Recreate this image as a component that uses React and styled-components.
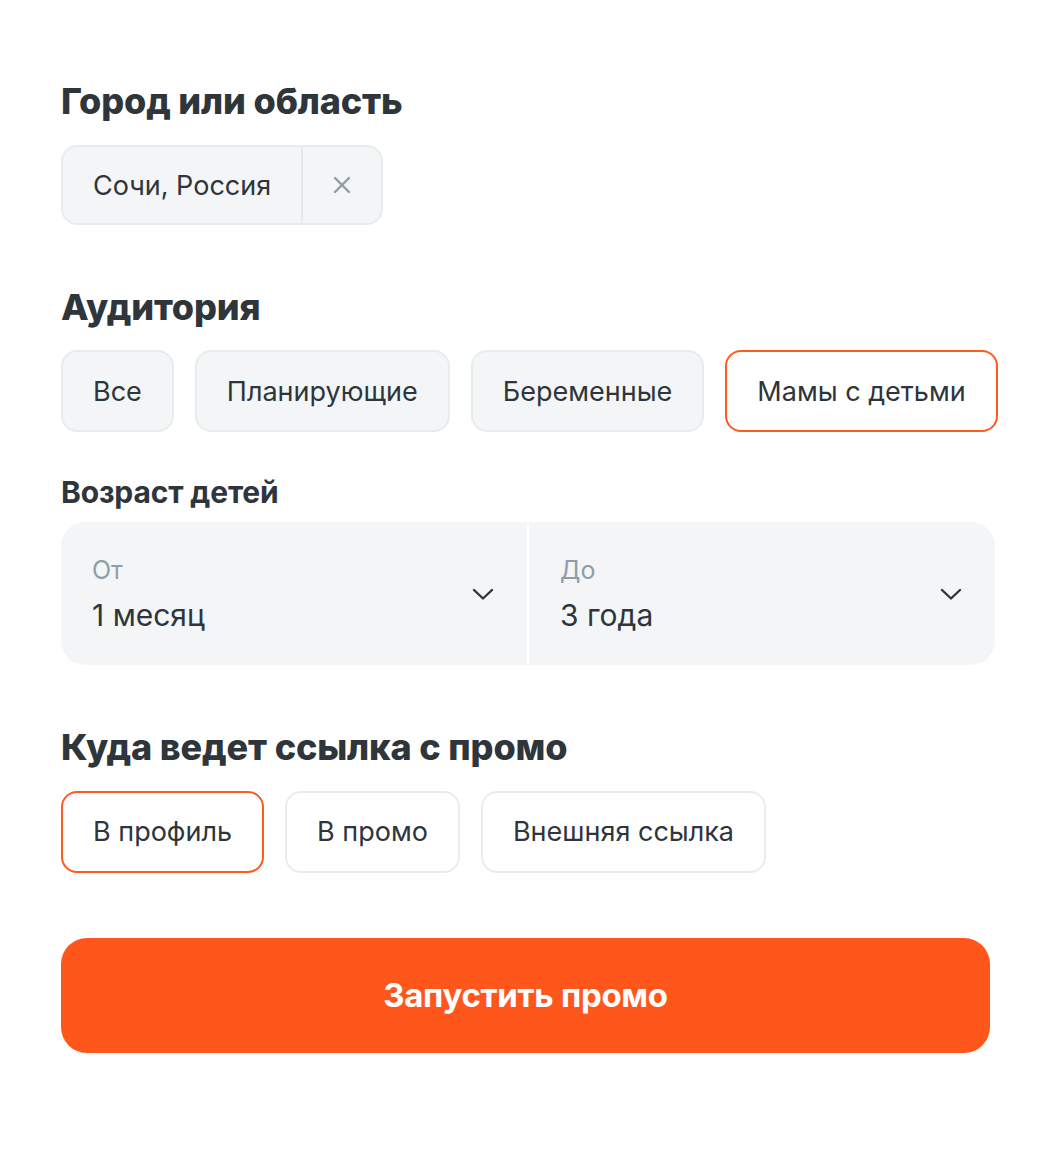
import React, { useState } from "react";
import styled, { createGlobalStyle } from "styled-components";

const GlobalStyle = createGlobalStyle`
	body {
		margin: 0;
		background: #ffffff;
		font-family: Inter, "Noto Sans", "Liberation Sans", sans-serif;
		color: #2e353b;
	}
`;

const Page = styled.div`
	width: 934px;
	padding: 80px 0 80px 61px;
	display: flex;
	flex-direction: column;
`;

const Title = styled.h2`
	margin: 0 0 ${({ $gap }) => $gap}px;
	font-size: ${({ $size }) => $size}px;
	line-height: 1.2;
	font-weight: ${({ $weight }) => $weight || 800};
	letter-spacing: -0.15px;
	color: #2e353b;
`;

const Section = styled.section`
	margin-bottom: ${({ $gap }) => $gap}px;
`;

const Row = styled.div`
	display: flex;
	gap: 21px;
`;

const Chip = styled.button`
	flex-shrink: 0;
	height: 82px;
	padding: 0 30px;
	border-radius: 16px;
	font-family: inherit;
	font-size: 27px;
	white-space: nowrap;
	color: #2e353b;
	background: ${({ $active, $plain }) => ($active || $plain ? "#ffffff" : "#f3f5f7")};
	border: 2px solid ${({ $active }) => ($active ? "#ff5a1f" : "#e6eeed")};
	cursor: pointer;
`;

const CityChip = styled.div`
	display: inline-flex;
	align-items: stretch;
	height: 80px;
	background: #f3f5f7;
	border: 2px solid #e6eeed;
	border-radius: 16px;
	box-sizing: border-box;
`;

const CityName = styled.span`
	display: flex;
	align-items: center;
	padding: 0 30px;
	font-size: 27px;
	border-right: 2px solid #e4eaea;
`;

const ClearButton = styled.button`
	width: 78px;
	border: 0;
	background: transparent;
	display: flex;
	align-items: center;
	justify-content: center;
	cursor: pointer;
`;

const SelectGroup = styled.div`
	display: grid;
	grid-template-columns: 1fr 1fr;
	gap: 2px;
	border-radius: 24px;
	overflow: hidden;
`;

const SelectBox = styled.div`
	height: 143px;
	background: #f3f5f7;
	display: flex;
	align-items: center;
	justify-content: space-between;
	padding: 0 33px 0 31px;
`;

const SelectText = styled.div`
	display: flex;
	flex-direction: column;
	gap: 12px;
`;

const SelectLabel = styled.span`
	font-size: 25px;
	color: #8d9ea9;
	line-height: 30px;
`;

const SelectValue = styled.span`
	font-size: 30px;
	color: #2e353b;
	line-height: 36px;
`;

const SubmitButton = styled.button`
	width: 929px;
	height: 115px;
	border: 0;
	border-radius: 26px;
	background: #ff561c;
	color: #ffffff;
	font-family: inherit;
	font-size: 33px;
	font-weight: 700;
	letter-spacing: -0.3px;
	cursor: pointer;
`;

const Chevron = () => (
	<svg width="22" height="14" viewBox="0 0 22 14" fill="none">
		<path d="M2 3l9 8.5L20 3" stroke="#2e353b" strokeWidth="2.4" strokeLinecap="round" strokeLinejoin="round" />
	</svg>
);

const CloseIcon = () => (
	<svg width="18" height="18" viewBox="0 0 18 18" fill="none">
		<path d="M2 2l14 14M16 2L2 16" stroke="#8d9ea9" strokeWidth="2.4" strokeLinecap="round" />
	</svg>
);

const audiences = ["Все", "Планирующие", "Беременные", "Мамы с детьми"];
const targets = ["В профиль", "В промо", "Внешняя ссылка"];

const App = () => {
	const [audience, setAudience] = useState("Мамы с детьми");
	const [target, setTarget] = useState("В профиль");

	return (
		<Page>
			<GlobalStyle />
			<Section $gap={61}>
				<Title $size={36} $gap={22}>Город или область</Title>
				<CityChip>
					<CityName>Сочи, Россия</CityName>
					<ClearButton aria-label="Очистить">
						<CloseIcon />
					</ClearButton>
				</CityChip>
			</Section>

			<Section $gap={42}>
				<Title $size={36} $gap={21}>Аудитория</Title>
				<Row>
					{audiences.map((a) => (
						<Chip key={a} $active={audience === a} onClick={() => setAudience(a)}>
							{a}
						</Chip>
					))}
				</Row>
			</Section>

			<Section $gap={61}>
				<Title $size={30} $weight={700} $gap={12}>Возраст детей</Title>
				<SelectGroup>
					<SelectBox>
						<SelectText>
							<SelectLabel>От</SelectLabel>
							<SelectValue>1 месяц</SelectValue>
						</SelectText>
						<Chevron />
					</SelectBox>
					<SelectBox>
						<SelectText>
							<SelectLabel>До</SelectLabel>
							<SelectValue>3 года</SelectValue>
						</SelectText>
						<Chevron />
					</SelectBox>
				</SelectGroup>
			</Section>

			<Section $gap={65}>
				<Title $size={36} $gap={21}>Куда ведет ссылка с промо</Title>
				<Row>
					{targets.map((t) => (
						<Chip key={t} $plain $active={target === t} onClick={() => setTarget(t)}>
							{t}
						</Chip>
					))}
				</Row>
			</Section>

			<SubmitButton>Запустить промо</SubmitButton>
		</Page>
	);
};

export default App;
